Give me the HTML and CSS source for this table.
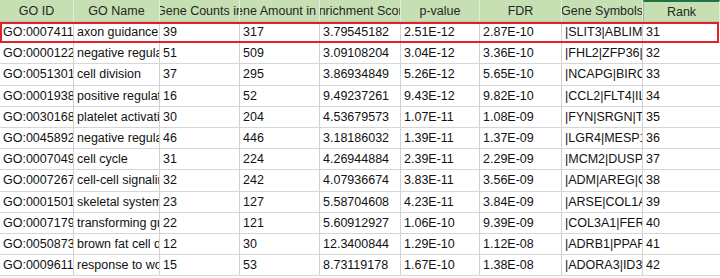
FILE: index.html
```html
<!DOCTYPE html>
<html lang="en">
<head>
  <meta charset="UTF-8" />
  <title>GO enrichment</title>
  <link rel="stylesheet" href="styles.css">
</head>
<body>
  <div class="sheet">
    <div class="row head">
      <div class="cell">GO ID</div>
      <div class="cell">GO Name</div>
      <div class="cell">Gene Counts in</div>
      <div class="cell">Gene Amount in All</div>
      <div class="cell">Enrichment Score</div>
      <div class="cell">p-value</div>
      <div class="cell">FDR</div>
      <div class="cell">Gene Symbols</div>
      <div class="cell rank">Rank</div>
    </div>

    <div class="row marked">
      <div class="cell">GO:0007411</div>
      <div class="cell">axon guidance</div>
      <div class="cell">39</div>
      <div class="cell">317</div>
      <div class="cell">3.79545182</div>
      <div class="cell">2.51E-12</div>
      <div class="cell">2.87E-10</div>
      <div class="cell">|SLIT3|ABLIM3|ROBO1</div>
      <div class="cell">31</div>
    </div>
    <div class="row">
      <div class="cell">GO:0000122</div>
      <div class="cell">negative regulation</div>
      <div class="cell">51</div>
      <div class="cell">509</div>
      <div class="cell">3.09108204</div>
      <div class="cell">3.04E-12</div>
      <div class="cell">3.36E-10</div>
      <div class="cell">|FHL2|ZFP36|KLF4</div>
      <div class="cell">32</div>
    </div>
    <div class="row">
      <div class="cell">GO:0051301</div>
      <div class="cell">cell division</div>
      <div class="cell">37</div>
      <div class="cell">295</div>
      <div class="cell">3.86934849</div>
      <div class="cell">5.26E-12</div>
      <div class="cell">5.65E-10</div>
      <div class="cell">|NCAPG|BIRC5|CDK1</div>
      <div class="cell">33</div>
    </div>
    <div class="row">
      <div class="cell">GO:0001938</div>
      <div class="cell">positive regulation</div>
      <div class="cell">16</div>
      <div class="cell">52</div>
      <div class="cell">9.49237261</div>
      <div class="cell">9.43E-12</div>
      <div class="cell">9.82E-10</div>
      <div class="cell">|CCL2|FLT4|IL6</div>
      <div class="cell">34</div>
    </div>
    <div class="row">
      <div class="cell">GO:0030168</div>
      <div class="cell">platelet activation</div>
      <div class="cell">30</div>
      <div class="cell">204</div>
      <div class="cell">4.53679573</div>
      <div class="cell">1.07E-11</div>
      <div class="cell">1.08E-09</div>
      <div class="cell">|FYN|SRGN|TLN1</div>
      <div class="cell">35</div>
    </div>
    <div class="row">
      <div class="cell">GO:0045892</div>
      <div class="cell">negative regulation</div>
      <div class="cell">46</div>
      <div class="cell">446</div>
      <div class="cell">3.18186032</div>
      <div class="cell">1.39E-11</div>
      <div class="cell">1.37E-09</div>
      <div class="cell">|LGR4|MESP1|SOX9</div>
      <div class="cell">36</div>
    </div>
    <div class="row">
      <div class="cell">GO:0007049</div>
      <div class="cell">cell cycle</div>
      <div class="cell">31</div>
      <div class="cell">224</div>
      <div class="cell">4.26944884</div>
      <div class="cell">2.39E-11</div>
      <div class="cell">2.29E-09</div>
      <div class="cell">|MCM2|DUSP1|CCNB1</div>
      <div class="cell">37</div>
    </div>
    <div class="row">
      <div class="cell">GO:0007267</div>
      <div class="cell">cell-cell signaling</div>
      <div class="cell">32</div>
      <div class="cell">242</div>
      <div class="cell">4.07936674</div>
      <div class="cell">3.83E-11</div>
      <div class="cell">3.56E-09</div>
      <div class="cell">|ADM|AREG|GJA1</div>
      <div class="cell">38</div>
    </div>
    <div class="row">
      <div class="cell">GO:0001501</div>
      <div class="cell">skeletal system development</div>
      <div class="cell">23</div>
      <div class="cell">127</div>
      <div class="cell">5.58704608</div>
      <div class="cell">4.23E-11</div>
      <div class="cell">3.84E-09</div>
      <div class="cell">|ARSE|COL1A1</div>
      <div class="cell">39</div>
    </div>
    <div class="row">
      <div class="cell">GO:0007179</div>
      <div class="cell">transforming growth factor</div>
      <div class="cell">22</div>
      <div class="cell">121</div>
      <div class="cell">5.60912927</div>
      <div class="cell">1.06E-10</div>
      <div class="cell">9.39E-09</div>
      <div class="cell">|COL3A1|FERMT2</div>
      <div class="cell">40</div>
    </div>
    <div class="row">
      <div class="cell">GO:0050873</div>
      <div class="cell">brown fat cell differentiation</div>
      <div class="cell">12</div>
      <div class="cell">30</div>
      <div class="cell">12.3400844</div>
      <div class="cell">1.29E-10</div>
      <div class="cell">1.12E-08</div>
      <div class="cell">|ADRB1|PPARG</div>
      <div class="cell">41</div>
    </div>
    <div class="row">
      <div class="cell">GO:0009611</div>
      <div class="cell">response to wounding</div>
      <div class="cell">15</div>
      <div class="cell">53</div>
      <div class="cell">8.73119178</div>
      <div class="cell">1.67E-10</div>
      <div class="cell">1.38E-08</div>
      <div class="cell">|ADORA3|ID3</div>
      <div class="cell">42</div>
    </div>
  </div>
</body>
</html>
```

FILE: styles.css
```css
body {
  margin: 0;
  background: white;
  font-family: 'Liberation Sans', Arial, sans-serif;
  font-size: 12.5px;
  color: #111;
  overflow: hidden;
}

.sheet {
  width: 720px;
}

.row {
  display: grid;
  grid-template-columns: 74px 86px 80px 80px 81px 79px 82px 81px 77px;
  height: 21.2px;
}

.cell {
  display: flex;
  align-items: center;
  padding-left: 3px;
  white-space: nowrap;
  overflow: hidden;
  border-right: 1px solid #d2d2d2;
  border-bottom: 1px solid #d6d6d6;
}

.cell:last-child {
  border-right: none;
}

/* header row */
.head {
  height: 22px;
  background-color: #c6dfb3;
}

.head .cell {
  justify-content: center;
  padding: 1px 0 0;
  color: #262626;
  border-right: 1px solid #e3edd9;
  border-bottom: 1px solid #b9cca9;
}

.head .rank {
  border-top: 2px solid #217346;
  padding-top: 0;
  border-left: 1px solid #9fb48e;
}

/* highlighted row */
.marked {
  outline: 2px solid #e6202b;
  outline-offset: -2px;
  margin-right: 1px;
}
```
